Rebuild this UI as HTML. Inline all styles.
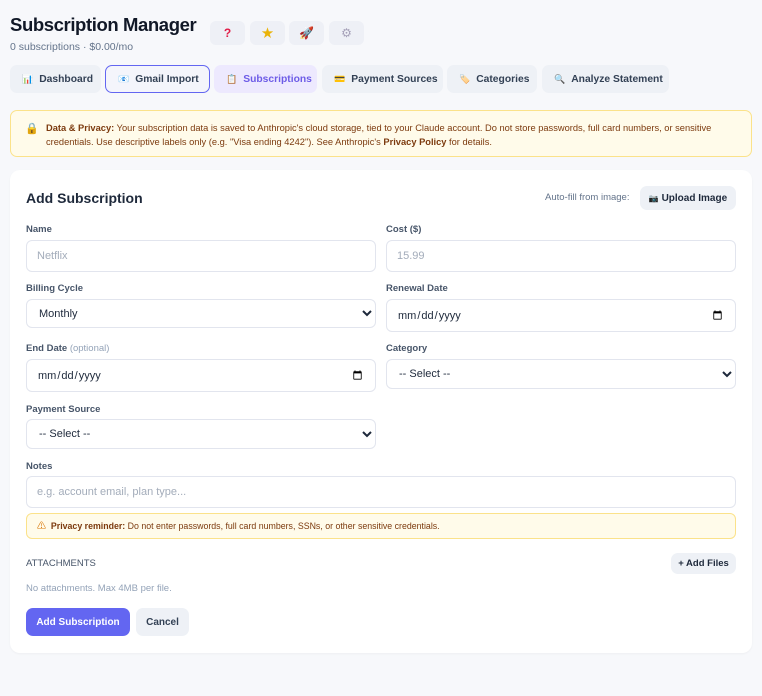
<!DOCTYPE html>
<html><head><meta charset="utf-8"><style>
*{box-sizing:border-box;margin:0;padding:0}
body{width:762px;height:696px;background:#f7f8fb;font-family:"Liberation Sans","Noto Sans CJK SC",sans-serif;color:#1e293b;position:relative;overflow:hidden}
.abs{position:absolute}
h1{position:absolute;left:10px;top:14px;font-size:18.5px;font-weight:800;color:#111827;letter-spacing:-0.4px}
.sub{left:10px;top:41px;font-size:10.5px;color:#64748b}
.ib{position:absolute;top:21px;width:35px;height:24px;border-radius:6px;background:#eef0f6;font-size:12px;text-align:center;line-height:24px}
.tab{position:absolute;top:65px;height:28px;border-radius:7px;background:#eef1f6;font-size:10.3px;font-weight:600;color:#334155;display:flex;align-items:center;padding-left:12px;white-space:nowrap}
.tab span{font-size:9px;margin-right:6px}
.banner{left:10px;top:110px;width:742px;height:47px;background:#fffbea;border:1px solid #fbe28a;border-radius:7px;font-size:9.3px;color:#7c3a0e;line-height:14px;padding:10px 10px 0 35px}
.card{left:10px;top:170px;width:742px;height:483px;background:#fff;border-radius:10px;box-shadow:0 1px 2px rgba(0,0,0,.04)}
.lbl{position:absolute;font-size:9.5px;font-weight:600;color:#475569}
.in{position:absolute;border:1px solid #e2e5ee;border-radius:6px;background:#fff;font-family:"Liberation Sans",sans-serif;font-size:11px;color:#1e293b;padding:0 10px}
.in::placeholder{color:#a3acba}
select.in{padding:0 8px;appearance:auto}
.btn{position:absolute;border-radius:7px;font-size:10px;font-weight:700;display:flex;align-items:center;justify-content:center}
</style></head><body>
<h1>Subscription Manager</h1>
<div class="abs sub">0 subscriptions · $0.00/mo</div>
<div class="ib" style="left:210px;color:#e11d48;font-weight:900">?</div>
<div class="ib" style="left:250px;color:#eab308">★</div>
<div class="ib" style="left:289px">🚀</div>
<div class="ib" style="left:329px;color:#a5a0b8">⚙</div>

<div class="tab" style="left:10px;width:91px"><span>📊</span>Dashboard</div>
<div class="tab" style="left:105px;width:105px;background:#f4f5fb;border:1px solid #6366f1"><span>📧</span>Gmail Import</div>
<div class="tab" style="left:214px;width:103px;background:#ede9fe;color:#6d5ce7"><span>📋</span>Subscriptions</div>
<div class="tab" style="left:322px;width:121px"><span>💳</span>Payment Sources</div>
<div class="tab" style="left:447px;width:90px"><span>🏷️</span>Categories</div>
<div class="tab" style="left:542px;width:127px"><span>🔍</span>Analyze Statement</div>

<div class="abs banner"><span class="abs" style="left:14px;top:11px;font-size:11px">🔒</span><b>Data &amp; Privacy:</b> Your subscription data is saved to Anthropic's cloud storage, tied to your Claude account. Do not store passwords, full card numbers, or sensitive credentials. Use descriptive labels only (e.g. "Visa ending 4242"). See Anthropic's <b style="font-weight:600">Privacy Policy</b> for details.</div>

<div class="abs card"></div>
<div class="abs" style="left:26px;top:190px;font-size:14px;font-weight:600;color:#1e293b">Add Subscription</div>
<div class="abs" style="left:545px;top:192px;font-size:9.5px;color:#64748b">Auto-fill from image:</div>
<div class="btn" style="left:640px;top:186px;width:96px;height:24px;background:#eef1f6;color:#1e293b"><span style="font-size:8px">📷</span>&nbsp;Upload Image</div>

<div class="lbl" style="left:26px;top:224px">Name</div>
<input class="in" style="left:26px;top:240px;width:350px;height:32px" placeholder="Netflix">
<div class="lbl" style="left:386px;top:224px">Cost ($)</div>
<input class="in" style="left:386px;top:240px;width:350px;height:32px" placeholder="15.99">

<div class="lbl" style="left:26px;top:283px">Billing Cycle</div>
<select class="in" style="left:26px;top:299px;width:350px;height:29px"><option>Monthly</option></select>
<div class="lbl" style="left:386px;top:283px">Renewal Date</div>
<input type="date" class="in" style="left:386px;top:299px;width:350px;height:33px">

<div class="lbl" style="left:26px;top:343px">End Date <span style="font-weight:400;color:#94a3b8">(optional)</span></div>
<input type="date" class="in" style="left:26px;top:359px;width:350px;height:33px">
<div class="lbl" style="left:386px;top:343px">Category</div>
<select class="in" style="left:386px;top:359px;width:350px;height:30px"><option>-- Select --</option></select>

<div class="lbl" style="left:26px;top:404px">Payment Source</div>
<select class="in" style="left:26px;top:419px;width:350px;height:30px"><option>-- Select --</option></select>

<div class="lbl" style="left:26px;top:461px">Notes</div>
<input class="in" style="left:26px;top:476px;width:710px;height:32px" placeholder="e.g. account email, plan type...">
<div class="abs" style="left:26px;top:513px;width:710px;height:26px;background:#fffbea;border:1px solid #fbe28a;border-radius:6px;font-size:8.8px;color:#7c3a0e;line-height:24px;padding-left:10px"><span style="color:#d97706;font-size:9px">⚠</span>&nbsp; <b>Privacy reminder:</b> Do not enter passwords, full card numbers, SSNs, or other sensitive credentials.</div>

<div class="abs" style="left:26px;top:558px;font-size:9.5px;color:#475569">ATTACHMENTS</div>
<div class="btn" style="left:671px;top:553px;width:65px;height:21px;background:#eef1f6;color:#1e293b;font-size:9.5px;font-weight:600">+ Add Files</div>
<div class="abs" style="left:26px;top:583px;font-size:9.5px;color:#94a3b8">No attachments. Max 4MB per file.</div>

<div class="btn" style="left:26px;top:608px;width:104px;height:28px;background:#6366f1;color:#fff">Add Subscription</div>
<div class="btn" style="left:136px;top:608px;width:53px;height:28px;background:#eef1f6;color:#334155;font-weight:600">Cancel</div>
</body></html>
